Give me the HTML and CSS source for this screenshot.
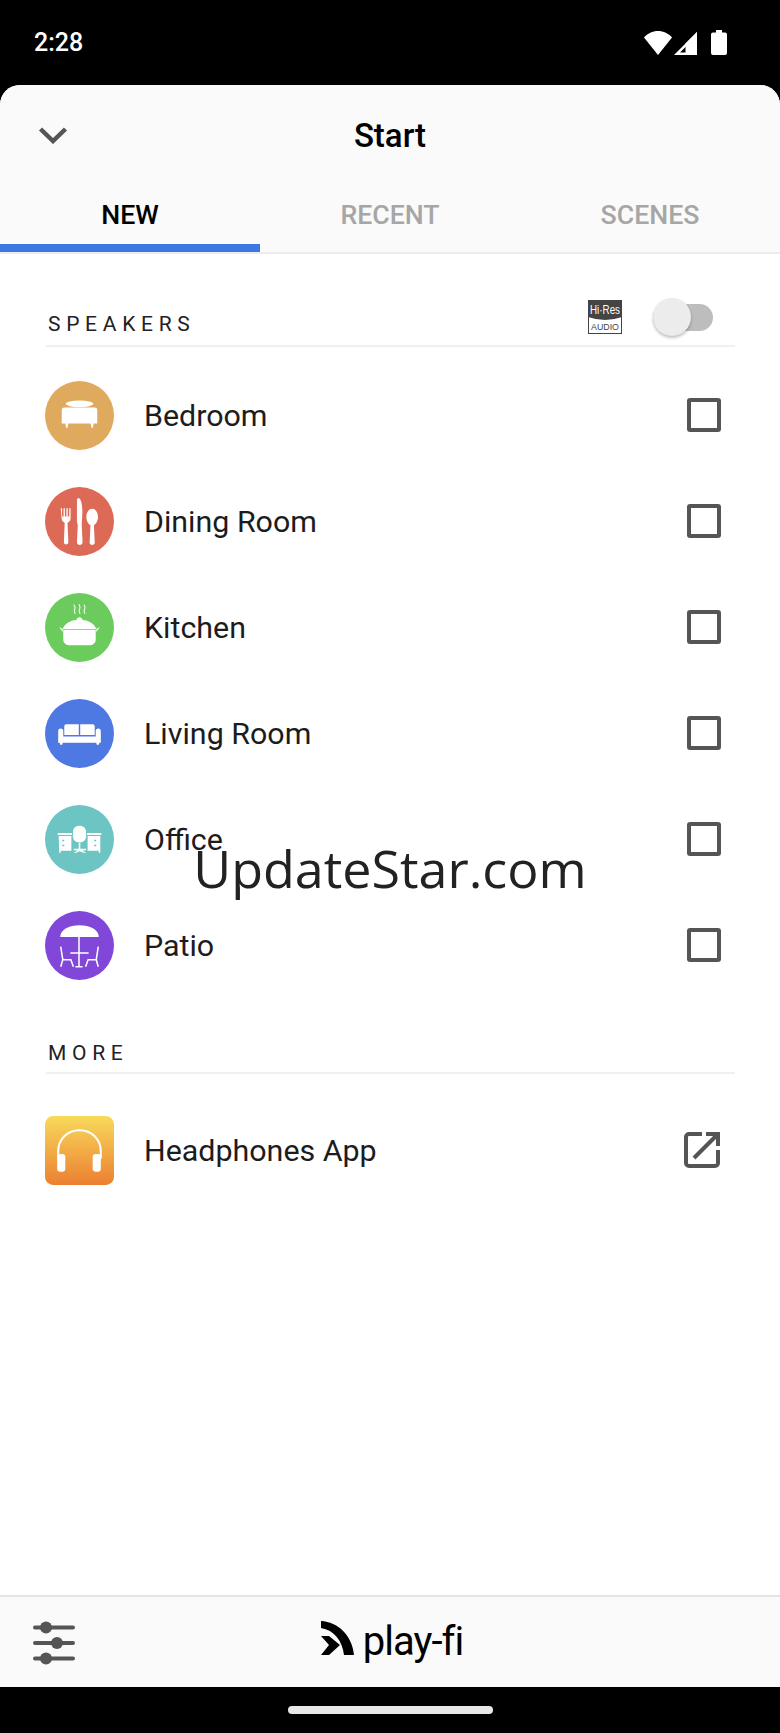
FILE: index.html
```html
<!DOCTYPE html>
<html lang="en">
<head>
    <meta charset="UTF-8">
    <meta name="viewport" content="width=device-width, initial-scale=1.0">
    <title>Start</title>
    <link rel="stylesheet" href="styles.css">
</head>
<body>
    <div class="screen">
        <div class="status-bar">
            <span class="clock">2:28</span>
            <div class="status-icons">
                <svg class="wifi" width="28" height="24" viewBox="0 0 28 24"><path d="M14 24 0 6.500C3.500 2.600 8.500 0 14 0s10.500 2.600 14 6.500z" fill="#fff"/></svg>
                <svg class="signal" width="24" height="24" viewBox="0 0 24 24"><path d="M23 1v23H0zM20.500 7 6 21.500h14.500z" fill="#fff" fill-rule="evenodd"/><path d="M23 1v23H11.500V12.500z" fill="#fff"/></svg>
                <svg class="battery" width="16" height="25" viewBox="0 0 16 25"><path d="M5 0h6v2.500h3a2 2 0 0 1 2 2V23a2 2 0 0 1-2 2H2a2 2 0 0 1-2-2V4.500a2 2 0 0 1 2-2h3z" fill="#fff"/></svg>
            </div>
        </div>

        <div class="sheet">
            <header class="sheet-head">
                <div class="title-row">
                    <svg class="chevron" width="30" height="18" viewBox="0 0 30 18"><path d="M2.500 3 15 15 27.500 3" fill="none" stroke="#555" stroke-width="4.500"/></svg>
                    <h1>Start</h1>
                </div>
                <nav class="tabs">
                    <a class="tab active">NEW</a>
                    <a class="tab">RECENT</a>
                    <a class="tab">SCENES</a>
                </nav>
            </header>

            <main class="content">
                <div class="section-head speakers-head">
                    <span class="section-label">SPEAKERS</span>
                    <div class="hires">
                        <svg class="hires-badge" width="34" height="34" viewBox="0 0 34 34">
                            <rect x=".5" y=".5" width="33" height="33" fill="#fff" stroke="#444"/>
                            <path d="M0 0h34v17q-17 6-34 0z" fill="#444"/>
                            <text x="17" y="14" text-anchor="middle" textLength="30" lengthAdjust="spacingAndGlyphs" class="hires-top">Hi·Res</text>
                            <text x="17" y="30" text-anchor="middle" textLength="28" lengthAdjust="spacingAndGlyphs" class="hires-bottom">AUDIO</text>
                        </svg>
                        <div class="toggle"><span class="knob"></span></div>
                    </div>
                </div>

                <ul class="rows">
                    <li class="row">
                        <svg class="room" width="69" height="69" viewBox="0 0 68 68">
                            <circle cx="34" cy="34" r="34" fill="#e0aa5e"/>
                            <ellipse cx="34" cy="22.500" rx="13.500" ry="3.300" fill="#fff"/>
                            <path d="M19 26h30a2.500 2.500 0 0 1 2.500 2.500V42h-35V28.500A2.500 2.500 0 0 1 19 26zM20 42h3l-.8 4h-1.400zM45 42h3l-.8 4h-1.400z" fill="#fff"/>
                        </svg>
                        <span class="row-name">Bedroom</span>
                        <span class="checkbox"></span>
                    </li>
                    <li class="row">
                        <svg class="room" width="69" height="69" viewBox="0 0 68 68">
                            <circle cx="34" cy="34" r="34" fill="#dc6a57"/>
                            <g fill="#fff">
                                <path d="M15.500 21h1.300v8h1.500v-8h1.300v8h1.500v-8h1.300v8h1.500v-8h1.300v10c0 2.500-2 3.500-3 4.500l.8 19c0 2.800-4.400 2.800-4.400 0l.8-19c-1-1-3-2-3-4.500z"/>
                                <path d="M33.500 11c2 1 3.300 6 3.300 14l-.6 12.500.8 17c0 3.400-5.500 3.400-5.500 0l.8-17-.8-3V13c0-1.300 1-2.500 2-2z"/>
                                <path d="M46.500 21.500c3 0 5.700 3.300 5.700 8 0 4-2 7-4 8l.8 17.500c0 2.800-5 2.800-5 0l.8-17.500c-2-1-4-4-4-8 0-4.700 2.700-8 5.700-8z"/>
                            </g>
                        </svg>
                        <span class="row-name">Dining Room</span>
                        <span class="checkbox"></span>
                    </li>
                    <li class="row">
                        <svg class="room" width="69" height="69" viewBox="0 0 68 68">
                            <circle cx="34" cy="34" r="34" fill="#6bcb5d"/>
                            <path d="M18 36.200h32V46a5.500 5.500 0 0 1-5.500 5.500h-21A5.500 5.500 0 0 1 18 46z" fill="#fff"/>
                            <path d="M17.500 35.500C19 30 25 27 31 26.500c.5-3.500 5.500-3.500 6 0 6 .5 12 3.500 13.500 9z" fill="#fff"/>
                            <path d="M14 33.500l3.500 2v3zM54 33.500l-3.500 2v3z" fill="#fff"/>
                            <path d="M28.500 11.500l1.200 3-.8 3 .8 3M33.500 11l1 3-.8 3.500.8 3M38.500 11.500l1 3-1 3 .8 3" fill="none" stroke="#fff" stroke-width="1"/>
                        </svg>
                        <span class="row-name">Kitchen</span>
                        <span class="checkbox"></span>
                    </li>
                    <li class="row">
                        <svg class="room" width="69" height="69" viewBox="0 0 68 68">
                            <circle cx="34" cy="34" r="34" fill="#4f79e2"/>
                            <path d="M21 25h12.300v10.500H19V27a2 2 0 0 1 2-2zM34.700 25H47a2 2 0 0 1 2 2v8.500H34.700zM13 31.500a2.500 2.500 0 0 1 5 0V37h32v-5.500a2.500 2.500 0 0 1 5 0V43h-1.500l-.5 2h-2l-.5-2H17.500l-.5 2h-2l-.5-2H13z" fill="#fff"/>
                        </svg>
                        <span class="row-name">Living Room</span>
                        <span class="checkbox"></span>
                    </li>
                    <li class="row">
                        <svg class="room" width="69" height="69" viewBox="0 0 68 68">
                            <circle cx="34" cy="34" r="34" fill="#6cc5c2"/>
                            <g fill="#fff">
                                <rect x="27.500" y="20.500" width="13" height="16.500" rx="6"/>
                                <path d="M33.200 37.500h1.600V43h5.700v1.600l-4 .4 4.500 2h-3L34 45.500 31 47h-3l4.500-2-4-.4V43h4.700z"/>
                                <path d="M12.500 27.500h14v2h-14zM41.500 27.500h14v2h-14z"/>
                                <path d="M13.500 30.500h12.500V45H15.500v2H14zM42 30.500h12.500V47H53v-2H42z"/>
                            </g>
                            <path d="M17 35h2M17 40h2M48.500 35h2M48.500 40h2" stroke="#6cc5c2" stroke-width="1.500"/>
                        </svg>
                        <span class="row-name">Office</span>
                        <span class="checkbox"></span>
                    </li>
                    <li class="row">
                        <svg class="room" width="69" height="69" viewBox="0 0 68 68">
                            <circle cx="34" cy="34" r="34" fill="#8047d9"/>
                            <path d="M15 25.500C15 18 24 14 34 14s19 4 19 11.500z" fill="#fff"/>
                            <path d="M33.500 25v30M25 41.500h18M30 55h7M15.500 35l2 13h8l2.500 7M17.500 48l-2 7M52.500 35l-2 13h-8l-2.500 7M50.500 48l2 7" fill="none" stroke="#fff" stroke-width="1.500"/>
                        </svg>
                        <span class="row-name">Patio</span>
                        <span class="checkbox"></span>
                    </li>
                </ul>

                <div class="section-head more-head">
                    <span class="section-label">MORE</span>
                </div>

                <div class="row app-row">
                    <svg class="room" width="69" height="69" viewBox="0 0 68 68">
                        <defs>
                            <linearGradient id="appfill" x1="0" y1="0" x2="0" y2="1">
                                <stop offset="0" stop-color="#f8da5b"/>
                                <stop offset="1" stop-color="#ec7f31"/>
                            </linearGradient>
                        </defs>
                        <rect width="68" height="68" rx="8" fill="url(#appfill)"/>
                        <path d="M13 42V35c0-12 9-21 21-21s21 9 21 21v7" fill="none" stroke="#fff" stroke-width="2"/>
                        <rect x="12" y="37.500" width="8" height="17.500" rx="3" fill="#fff"/>
                        <rect x="47" y="37.500" width="8" height="17.500" rx="3" fill="#fff"/>
                    </svg>
                    <span class="row-name">Headphones App</span>
                    <svg class="open-link" width="36" height="36" viewBox="0 0 36 36">
                        <path d="M18 2H5a3 3 0 0 0-3 3v26a3 3 0 0 0 3 3h26a3 3 0 0 0 3-3V18" fill="none" stroke="#555" stroke-width="4"/>
                        <path d="M10 26 33 3M22 2h12v12" fill="none" stroke="#555" stroke-width="4"/>
                    </svg>
                </div>
            </main>

            <footer class="sheet-foot">
                <svg class="sliders" width="42" height="44" viewBox="0 0 42 44">
                    <g stroke="#555" stroke-width="4" stroke-linecap="round">
                        <path d="M2 6.500h38M2 22h38M2 37.500h38"/>
                    </g>
                    <circle cx="13" cy="6.500" r="6" fill="#555"/>
                    <circle cx="24" cy="22" r="6" fill="#555"/>
                    <circle cx="13" cy="37.500" r="6" fill="#555"/>
                </svg>
                <div class="logo">
                    <svg width="33" height="34" viewBox="0 0 33 34">
                        <path d="M0 0c17 1 31 14 33 34H23C21.500 20 13 9 0 7z" fill="#000"/>
                        <path d="M0 15h8l11 9-11 10H0l8-10z" fill="#000"/>
                    </svg>
                    <span class="logo-text">play-fi</span>
                </div>
            </footer>
        </div>

        <div class="nav-bar"><span class="home-pill"></span></div>
        <div class="watermark">UpdateStar.com</div>
    </div>
</body>
</html>
```

FILE: styles.css
```css
* {
    box-sizing: border-box;
}

body {
    margin: 0;
    background: #000;
    font-family: Roboto, 'Liberation Sans', sans-serif;
}

.screen {
    position: relative;
    width: 780px;
    height: 1733px;
    display: flex;
    flex-direction: column;
    overflow: hidden;
    background: #000;
}

.status-bar {
    height: 85px;
    flex: none;
    display: flex;
    align-items: center;
    justify-content: space-between;
    padding: 0 53px 0 34px;
    color: #fff;
}

.clock {
    font-size: 25px;
    font-weight: 500;
}

.status-icons {
    display: flex;
    align-items: center;
    gap: 2px;
}

.status-icons .battery {
    margin-left: 11px;
}

.sheet {
    flex: 1;
    display: flex;
    flex-direction: column;
    background: #fff;
    border-radius: 20px 20px 0 0;
    overflow: hidden;
}

.sheet-head {
    height: 169px;
    flex: none;
    background: #fafafa;
    border-bottom: 2px solid #ececec;
}

.title-row {
    height: 100px;
    position: relative;
    display: flex;
    align-items: center;
    justify-content: center;
}

.title-row h1 {
    margin: 0;
    font-size: 33px;
    font-weight: 500;
    color: #000;
}

.chevron {
    position: absolute;
    left: 38px;
    top: 41px;
}

.tabs {
    display: flex;
    height: 67px;
}

.tab {
    flex: 1;
    display: flex;
    align-items: center;
    justify-content: center;
    font-size: 26.700px;
    font-weight: 500;
    color: #a6a6a6;
    border-bottom: 8px solid transparent;
}

.tab.active {
    color: #000;
    border-bottom-color: #3b78e2;
}

.content {
    flex: 1;
}

.section-head {
    margin: 0 45px 0 46px;
    display: flex;
    align-items: flex-end;
    justify-content: space-between;
    border-bottom: 2px solid #f0f0f0;
}

.speakers-head {
    height: 93px;
    padding-bottom: 9px;
}

.more-head {
    height: 76px;
    padding-bottom: 7px;
}

.section-label {
    font-size: 21px;
    letter-spacing: 5.700px;
    padding-left: 2px;
    color: #222;
}

.hires {
    display: flex;
    align-items: center;
    gap: 31px;
    margin-right: 22px;
    margin-bottom: 2px;
}

.hires-top {
    font-family: 'Liberation Sans', sans-serif;
    font-size: 13px;
    fill: #fff;
}

.hires-bottom {
    font-family: 'Liberation Sans', sans-serif;
    font-size: 9px;
    fill: #444;
}

.toggle {
    position: relative;
    width: 60px;
    height: 27px;
    border-radius: 14px;
    background: #bdbdbd;
}

.knob {
    position: absolute;
    left: 0;
    top: -6px;
    width: 38px;
    height: 38px;
    border-radius: 50%;
    background: #ececec;
    box-shadow: 0 2px 3px rgba(0, 0, 0, .25);
}

.rows {
    list-style: none;
    margin: 0;
    padding: 15px 0 0;
}

.row {
    height: 106px;
    display: flex;
    align-items: center;
    padding: 0 59px 0 45px;
}

.row-name {
    flex: 1;
    margin-left: 30px;
    font-size: 30.400px;
    color: #1c1c1c;
}

.checkbox {
    width: 34px;
    height: 34px;
    border: 4px solid #555;
    border-radius: 3px;
}

.app-row {
    margin-top: 23px;
}

.open-link {
    margin-right: 1px;
}

.sheet-foot {
    height: 92px;
    flex: none;
    position: relative;
    display: flex;
    align-items: center;
    justify-content: center;
    background: #fafafa;
    border-top: 2px solid #e4e4e4;
}

.sliders {
    position: absolute;
    left: 33px;
    top: 24px;
}

.logo {
    display: flex;
    align-items: baseline;
    margin-left: 4px;
    gap: 9px;
}

.logo-text {
    font-size: 40px;
    font-weight: 400;
    letter-spacing: -1px;
    line-height: 44px;
    color: #000;
}

.nav-bar {
    height: 46px;
    flex: none;
    display: flex;
    justify-content: center;
    padding-top: 19px;
    background: #000;
}

.home-pill {
    width: 205px;
    height: 8px;
    border-radius: 4px;
    background: #e8e8e8;
}

.watermark {
    position: absolute;
    left: 0;
    right: 0;
    top: 830px;
    text-align: center;
    font-family: 'Open Sans', sans-serif;
    font-size: 52px;
    line-height: 76px;
    color: #222;
}
```
